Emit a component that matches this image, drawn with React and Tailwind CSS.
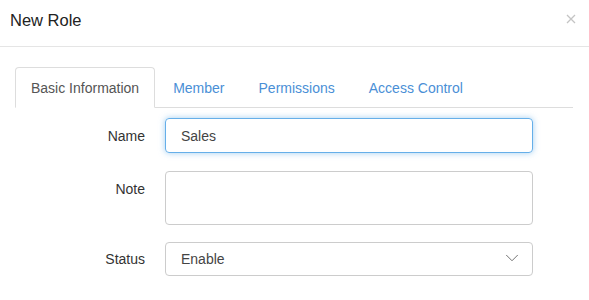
import React, { useState } from 'react'
import { ChevronDown } from 'lucide-react'

const tabs = ['Basic Information', 'Member', 'Permissions', 'Access Control']

export default function App() {
  const [active, setActive] = useState(0)
  const [name, setName] = useState('Sales')
  const [note, setNote] = useState('')
  const [status, setStatus] = useState('Enable')

  return (
    <div className="w-[589px] h-[300px] bg-white overflow-hidden text-[14px] text-[#333]" style={{ fontFamily: '"Liberation Sans", Arial, sans-serif' }}>
      {/* header */}
      <div className="h-[47px] border-b border-[#e5e5e5] px-[10px] flex items-start justify-between">
        <div className="h-[40px] flex items-center text-[16.5px] text-[#222]">New Role</div>
        <button className="h-[38px] w-[20px] flex items-center justify-center -mr-[2px]" aria-label="Close">
          <svg width="10" height="10" viewBox="0 0 10 10" stroke="#c4c4c4" strokeWidth="1.3">
            <path d="M1 1 L9 9 M9 1 L1 9" />
          </svg>
        </button>
      </div>

      <div className="pt-[20px] pl-[15px] pr-[16px]">
        {/* tabs */}
        <ul className="flex border-b border-[#ddd]">
          {tabs.map((t, i) => (
            <li key={t} className="mr-[2px] -mb-px">
              <button
                onClick={() => setActive(i)}
                className={i === active
                  ? 'h-[41px] pt-[2px] px-[15px] border border-[#ddd] border-b-white rounded-t-[4px] bg-white text-[#555]'
                  : 'h-[41px] pt-[2px] px-[15px] border border-transparent text-[#4a8fd6]'}
              >
                {t}
              </button>
            </li>
          ))}
        </ul>

        {/* form */}
        <div className="pt-[10px]">
          <div className="flex items-center mb-[18px]">
            <label className="w-[150px] pr-[20px] text-right pt-[1px]">Name</label>
            <input
              value={name}
              onChange={e => setName(e.target.value)}
              className="w-[368px] h-[35px] px-[15px] border border-[#66afe9] rounded-[4px] text-[#444] outline-none shadow-[0_0_6px_rgba(102,175,233,0.6)]"
            />
          </div>
          <div className="flex items-start mb-[17px]">
            <label className="w-[150px] pr-[20px] text-right pt-[8px]">Note</label>
            <textarea
              value={note}
              onChange={e => setNote(e.target.value)}
              className="w-[368px] h-[54px] px-[15px] py-[6px] border border-[#ccc] rounded-[4px] text-[#444] outline-none resize-none"
            />
          </div>
          <div className="flex items-center">
            <label className="w-[150px] pr-[20px] text-right">Status</label>
            <div className="relative w-[368px] h-[34px]">
              <select
                value={status}
                onChange={e => setStatus(e.target.value)}
                className="appearance-none w-full h-full px-[15px] border border-[#ccc] rounded-[4px] text-[#444] bg-white outline-none"
              >
                <option>Enable</option>
                <option>Disable</option>
              </select>
              <ChevronDown size={22} strokeWidth={1} className="absolute right-[10px] top-[5px] text-[#666] pointer-events-none" />
            </div>
          </div>
        </div>
      </div>
    </div>
  )
}
